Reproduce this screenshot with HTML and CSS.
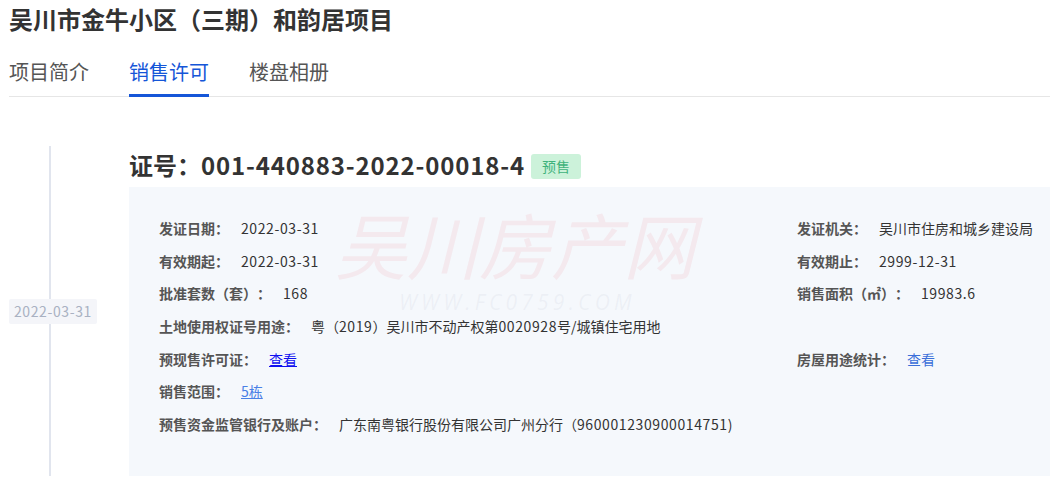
FILE: index.html
```html
<!DOCTYPE html>
<html lang="zh-CN">
<head>
  <meta charset="UTF-8">
  <meta name="viewport" content="width=device-width, initial-scale=1.0">
  <title>吴川市金牛小区（三期）和韵居项目 - 销售许可</title>
  <link rel="stylesheet" href="styles.css">
</head>
<body>
  <div class="page">
    <h1 class="title">吴川市金牛小区（三期）和韵居项目</h1>

    <!-- tabs -->
    <ul class="tabs">
      <li class="tab">项目简介</li>
      <li class="tab active">销售许可</li>
      <li class="tab">楼盘相册</li>
    </ul>

    <!-- permit timeline -->
    <div class="timeline">
      <div class="tl-item">
        <div class="tl-side">
          <span class="tl-date">2022-03-31</span>
        </div>
        <div class="tl-main">
          <h2 class="permit-no"><span>证号：<span class="num">001-440883-2022-00018-4</span></span><span class="tag">预售</span></h2>
          <div class="permit-box">
            <div class="watermark">
              <div class="wm-name">吴川房产网</div>
              <div class="wm-url">WWW.FC0759.COM</div>
            </div>
            <div class="permit-grid">
              <div class="row"><span class="label">发证日期：</span><span class="num">2022-03-31</span></div>
              <div class="row"><span class="label">发证机关：</span>吴川市住房和城乡建设局</div>
              <div class="row"><span class="label">有效期起：</span><span class="num">2022-03-31</span></div>
              <div class="row"><span class="label">有效期止：</span><span class="num">2999-12-31</span></div>
              <div class="row"><span class="label">批准套数（套）：</span><span class="num">168</span></div>
              <div class="row"><span class="label">销售面积（㎡）：</span><span class="num">19983.6</span></div>
              <div class="row"><span class="label">土地使用权证号用途：</span>粤（<span class="num">2019</span>）吴川市不动产权第<span class="num">0020928</span>号/城镇住宅用地</div>
              <div class="row"></div>
              <div class="row"><span class="label">预现售许可证：</span><a class="link-view" href="#">查看</a></div>
              <div class="row"><span class="label">房屋用途统计：</span><a class="link-stat" href="#">查看</a></div>
              <div class="row wide"><span class="label">销售范围：</span><a class="link-range" href="#">5栋</a></div>
              <div class="row wide"><span class="label">预售资金监管银行及账户：</span>广东南粤银行股份有限公司广州分行（<span class="num">960001230900014751</span>)</div>
            </div>
          </div>
        </div>
      </div>
    </div>
  </div>
</body>
</html>
```

FILE: styles.css
```css
body { margin: 0; font-family: "Noto Sans CJK SC", "Microsoft YaHei", sans-serif; color: #333; background: #fff; text-spacing-trim: space-all; }
.page { padding-left: 9px; overflow: hidden; }

.title { margin: 0; font-size: 24px; line-height: 38px; font-weight: bold; color: #333; }

.tabs { list-style: none; margin: 0; padding: 20px 0 0; display: flex; gap: 40px; border-bottom: 1px solid #e6e6e6; }
.tab { font-size: 20px; line-height: 28px; padding-bottom: 8px; border-bottom: 3px solid transparent; margin-bottom: -1px; color: #555; }
.tab.active { color: #1556d8; border-bottom-color: #1556d8; }

.timeline { margin-top: 49px; }
.tl-item { display: flex; padding-bottom: 10px; }
.tl-side { width: 120px; flex-shrink: 0; background: linear-gradient(#e1e5ee, #e1e5ee) no-repeat 40px 0 / 2px 100%; }
.tl-date { display: inline-block; margin-top: 153px; padding: 0 5px; font-size: 14px; line-height: 25px; letter-spacing: 0.6px; color: #a9b1c2; background: #f4f5f9; border-radius: 2px; }
.tl-main { flex: 1; }

.permit-no { margin: 0; font-size: 24px; line-height: 38px; font-weight: bold; color: #333; display: flex; align-items: center; gap: 6px; }
.permit-no .num { letter-spacing: 0.85px; }
.tag { font-size: 14px; font-weight: normal; line-height: 25px; padding: 0 11px; margin-top: 3px; color: #3fb27c; background: #ccf2da; border-radius: 3px; }

.permit-box { position: relative; margin-top: 3px; padding: 25px 0 35px 30px; background: #f5f8fc; }
.watermark { position: absolute; left: 206px; top: 14px; z-index: 0; font-style: italic; pointer-events: none; }
.wm-name { font-size: 72px; line-height: 84px; color: rgba(238, 120, 130, 0.11); }
.wm-url { margin: 6px 0 0 64px; font-size: 21px; line-height: 22px; letter-spacing: 4.2px; color: rgba(190, 195, 210, 0.16); font-family: "Open Sans", sans-serif; }

.permit-grid { position: relative; z-index: 1; display: grid; grid-template-columns: 638px 1fr; }
.row { font-size: 14px; line-height: 32.7px; height: 32.7px; white-space: nowrap; color: #333; }
.row .num { letter-spacing: 0.6px; }
.row.wide { grid-column: 1 / 3; }
.label { font-weight: bold; color: #555; margin-right: 12px; }

.link-view { color: #1010f0; text-decoration: underline; }
.link-stat { color: #3b6fd9; text-decoration: none; }
.link-range { color: #4a80e6; text-decoration: underline; }
```
